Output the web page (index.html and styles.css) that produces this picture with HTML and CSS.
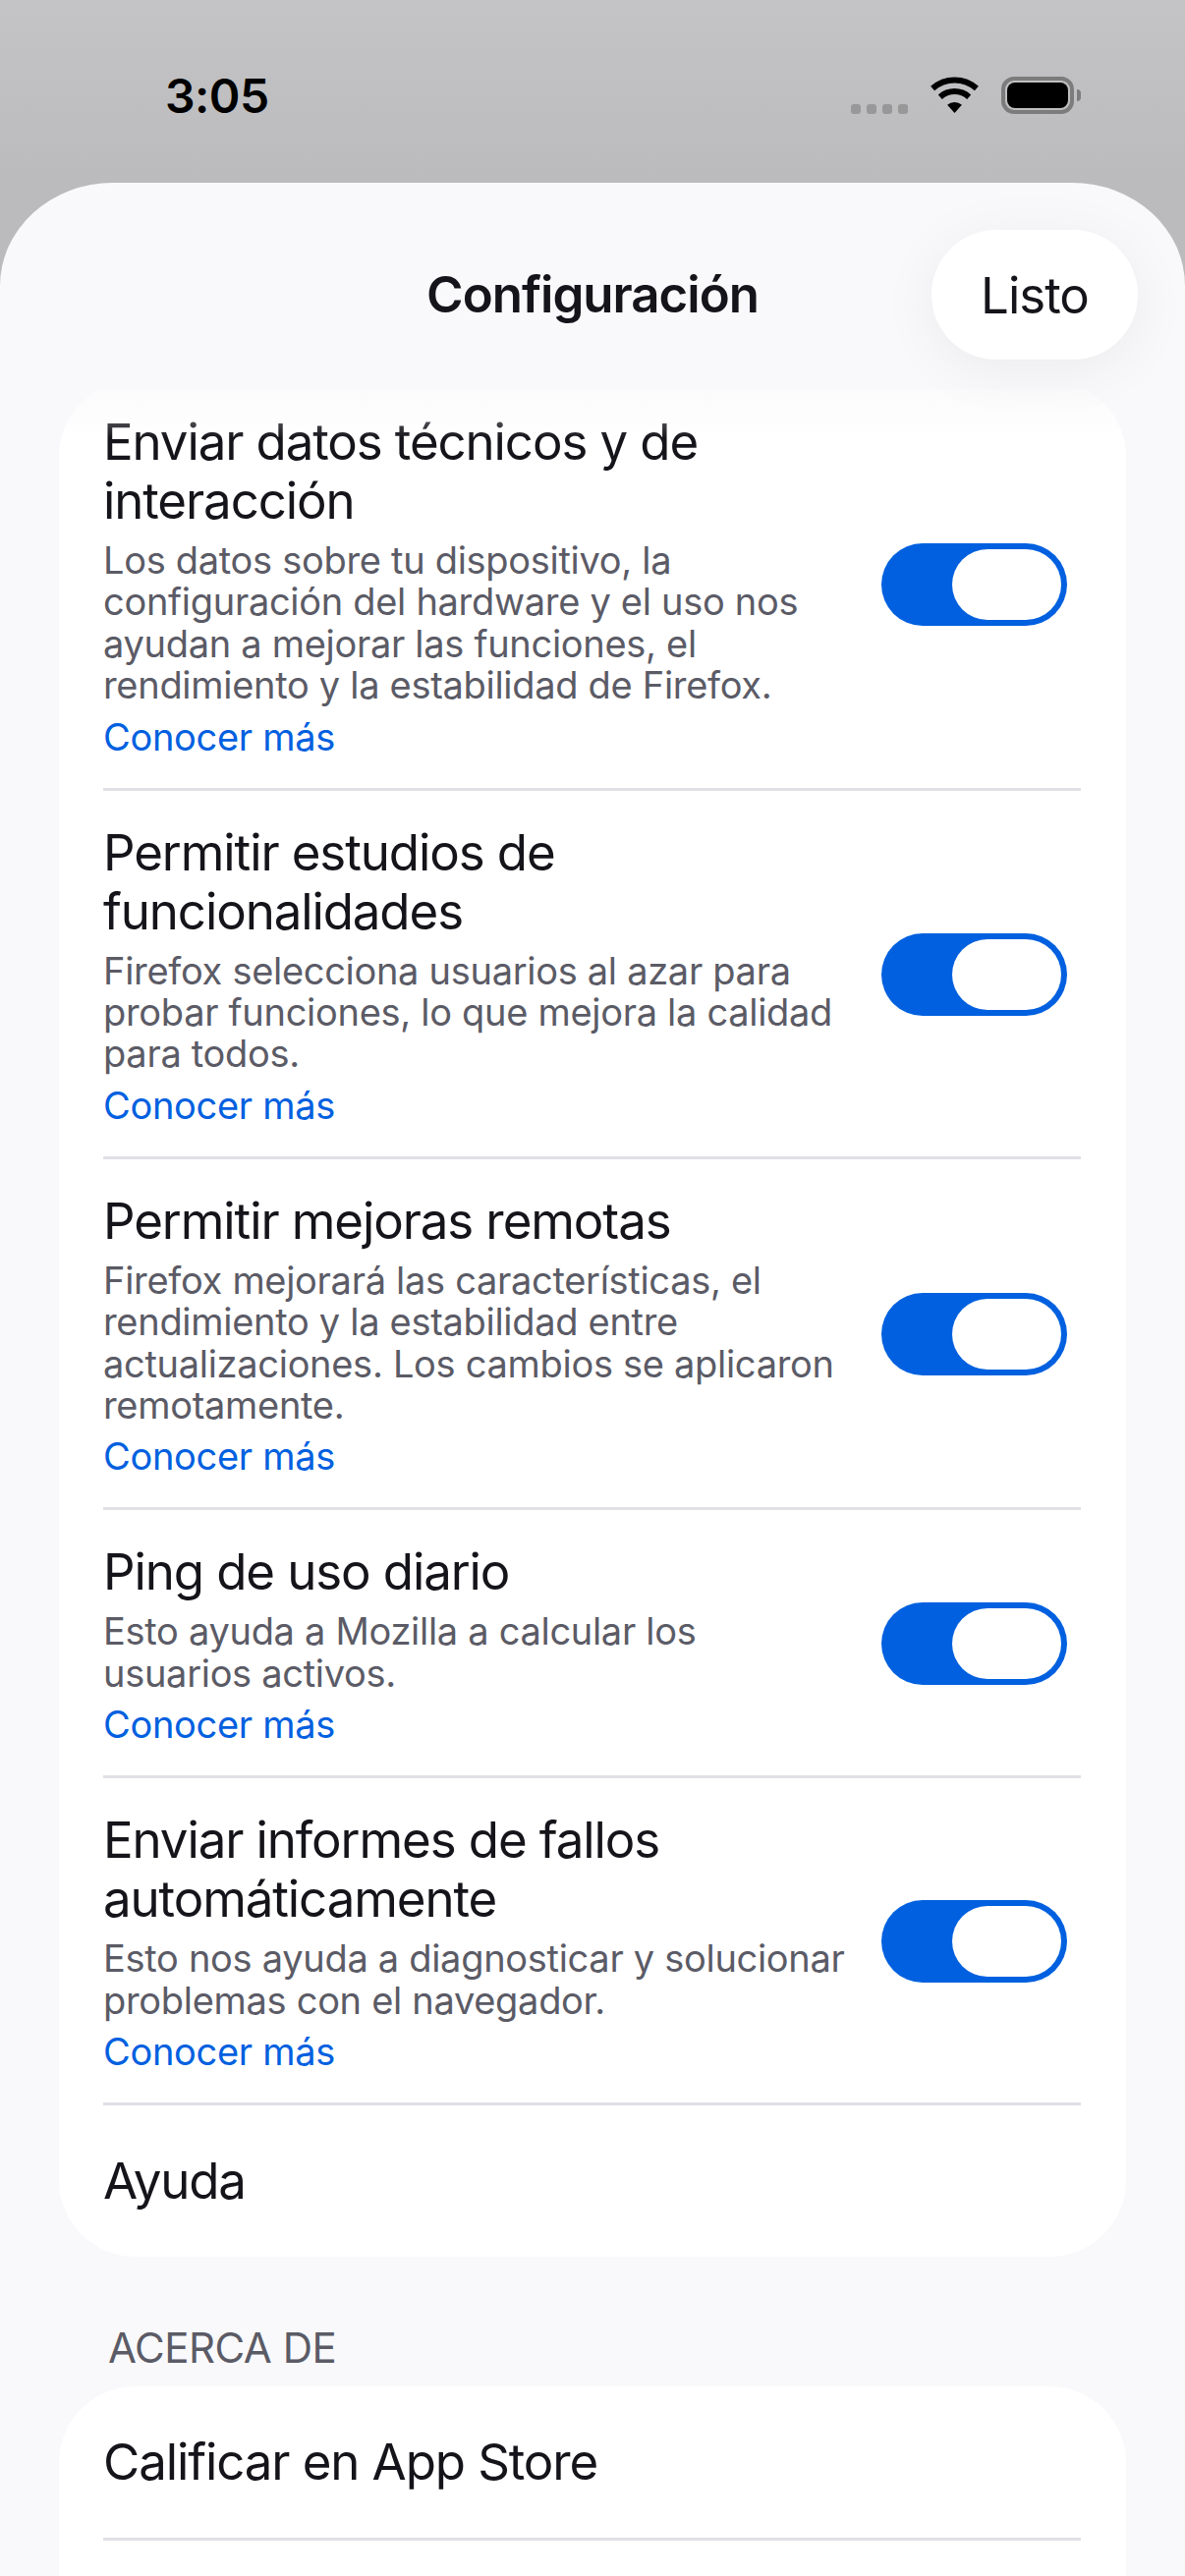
FILE: index.html
```html
<!DOCTYPE html>
<html lang="es">
<head>
    <meta charset="utf-8">
    <title>Configuración</title>
    <link rel="stylesheet" href="styles.css">
</head>
<body>
    <div class="status-bar">
        <span class="time">3:05</span>
        <div class="status-icons">
            <div class="signal"><i></i><i></i><i></i><i></i></div>
            <svg class="wifi" width="51" height="37" viewBox="0 0 51 37">
                <path d="M3.1 12.1A33.5 33.5 0 0 1 47.9 12.1" fill="none" stroke="#000" stroke-width="6"/>
                <path d="M10.8 20.7A22 22 0 0 1 40.2 20.7" fill="none" stroke="#000" stroke-width="6"/>
                <path d="M25.5 37L18.1 28.8A11 11 0 0 1 32.9 28.8Z" fill="#000"/>
            </svg>
            <div class="battery"><div class="battery-fill"></div></div>
            <div class="battery-nub"></div>
        </div>
    </div>

    <div class="sheet">
        <div class="nav">
            <h1 class="nav-title">Configuración</h1>
            <button class="done">Listo</button>
        </div>

        <div class="content">
            <div class="fade"></div>
            <div class="card card-scrolled">
                <div class="row">
                    <div class="row-text">
                        <div class="row-title">Enviar datos técnicos y de<br>interacción</div>
                        <div class="row-desc">Los datos sobre tu dispositivo, la<br>configuración del hardware y el uso nos<br>ayudan a mejorar las funciones, el<br>rendimiento y la estabilidad de Firefox.</div>
                        <a class="row-link">Conocer más</a>
                    </div>
                    <div class="toggle"><div class="knob"></div></div>
                </div>
                <div class="row">
                    <div class="row-text">
                        <div class="row-title">Permitir estudios de<br>funcionalidades</div>
                        <div class="row-desc">Firefox selecciona usuarios al azar para<br>probar funciones, lo que mejora la calidad<br>para todos.</div>
                        <a class="row-link">Conocer más</a>
                    </div>
                    <div class="toggle"><div class="knob"></div></div>
                </div>
                <div class="row">
                    <div class="row-text">
                        <div class="row-title">Permitir mejoras remotas</div>
                        <div class="row-desc">Firefox mejorará las características, el<br>rendimiento y la estabilidad entre<br>actualizaciones. Los cambios se aplicaron<br>remotamente.</div>
                        <a class="row-link">Conocer más</a>
                    </div>
                    <div class="toggle"><div class="knob"></div></div>
                </div>
                <div class="row">
                    <div class="row-text">
                        <div class="row-title">Ping de uso diario</div>
                        <div class="row-desc">Esto ayuda a Mozilla a calcular los<br>usuarios activos.</div>
                        <a class="row-link">Conocer más</a>
                    </div>
                    <div class="toggle"><div class="knob"></div></div>
                </div>
                <div class="row">
                    <div class="row-text">
                        <div class="row-title">Enviar informes de fallos<br>automáticamente</div>
                        <div class="row-desc">Esto nos ayuda a diagnosticar y solucionar<br>problemas con el navegador.</div>
                        <a class="row-link">Conocer más</a>
                    </div>
                    <div class="toggle"><div class="knob"></div></div>
                </div>
                <div class="row row-plain">
                    <div class="row-title">Ayuda</div>
                </div>
            </div>

            <h2 class="section-label">ACERCA DE</h2>
            <div class="card">
                <div class="row row-plain">
                    <div class="row-title">Calificar en App Store</div>
                </div>
                <div class="row row-plain"></div>
            </div>
        </div>
    </div>
</body>
</html>
```

FILE: styles.css
```css
html, body {
    margin: 0;
    padding: 0;
}

body {
    width: 1206px;
    height: 2622px;
    overflow: hidden;
    background: linear-gradient(#c4c4c6, #bbbbbd 186px, #bbbbbd 320px);
    font-family: Inter, "Liberation Sans", sans-serif;
    color: #15141a;
}

.status-bar {
    height: 186px;
    box-sizing: border-box;
    padding: 70px 106px 0 168px;
    display: flex;
    justify-content: space-between;
    align-items: flex-start;
}

.time {
    font-size: 48px;
    font-weight: 600;
    line-height: 56px;
    letter-spacing: -0.5px;
    color: #000;
}

.status-icons {
    display: flex;
    align-items: flex-start;
    margin-top: 8px;
}

.signal {
    display: flex;
    gap: 6px;
    margin: 28px 22px 0 0;
}

.signal i {
    width: 10px;
    height: 10px;
    border-radius: 3px;
    background: #989899;
}

.battery {
    width: 74px;
    height: 38px;
    margin-left: 22px;
    box-sizing: border-box;
    border: 4px solid #7c7c7c;
    border-radius: 13px;
    padding: 2px;
}

.battery-fill {
    height: 100%;
    border-radius: 8px;
    background: #000;
}

.battery-nub {
    width: 4px;
    height: 12px;
    margin: 13px 0 0 3px;
    border-radius: 0 4px 4px 0;
    background: #7c7c7c;
}

.sheet {
    height: 2436px;
    border-radius: 115px 115px 0 0 / 105px 105px 0 0;
    background: #f9f9fb;
    overflow: hidden;
}

.nav {
    height: 210px;
    box-sizing: border-box;
    padding: 48px 48px 0 0;
    display: flex;
    justify-content: flex-end;
    position: relative;
}

.nav-title {
    margin: 0;
    width: 100%;
    font-size: 51px;
    font-weight: 600;
    line-height: 132px;
    text-align: center;
    letter-spacing: -1px;
    position: absolute;
    left: 0;
    top: 48px;
}

.done {
    width: 210px;
    height: 132px;
    border: 0;
    border-radius: 66px;
    background: #fff;
    font-family: inherit;
    font-size: 51px;
    color: #15141a;
    letter-spacing: -1px;
    box-shadow: 0 10px 60px rgba(0, 0, 0, 0.06);
    position: relative;
    z-index: 2;
}

.content {
    position: relative;
    height: 2226px;
    overflow: hidden;
    padding: 0 60px;
}

.fade {
    position: absolute;
    left: 0;
    right: 0;
    top: 0;
    height: 50px;
    background: linear-gradient(rgba(249, 249, 251, 0.7), rgba(249, 249, 251, 0));
}

.card {
    background: #fff;
    border-radius: 78px;
    padding: 0 46px 0 45px;
}

.card-scrolled {
    margin-top: -9px;
}

.row {
    display: flex;
    justify-content: space-between;
    align-items: center;
    padding: 33px 14px 31px 0;
    border-bottom: 3px solid #e0e0e6;
}

.row:last-child {
    border-bottom: 0;
}

.row-plain {
    padding: 0;
    height: 154px;
}

.row-title {
    font-size: 51px;
    line-height: 60px;
    letter-spacing: -1.1px;
}

.row-desc {
    margin-top: 9px;
    font-size: 38px;
    line-height: 42.4px;
    letter-spacing: -0.3px;
    color: #5b5b66;
}

.row-link {
    display: block;
    margin-top: 10px;
    font-size: 38px;
    line-height: 42px;
    letter-spacing: -0.3px;
    color: #0060df;
}

.toggle {
    width: 189px;
    height: 84px;
    box-sizing: border-box;
    padding: 6px;
    border-radius: 42px;
    background: #0060df;
    display: flex;
    justify-content: flex-end;
    flex: none;
}

.knob {
    width: 111px;
    height: 72px;
    border-radius: 36px;
    background: #fff;
}

.section-label {
    margin: 65px 0 0;
    padding: 0 50px;
    height: 67px;
    font-size: 42px;
    font-weight: 400;
    line-height: 56px;
    letter-spacing: -0.5px;
    color: #5b5b66;
}
```
